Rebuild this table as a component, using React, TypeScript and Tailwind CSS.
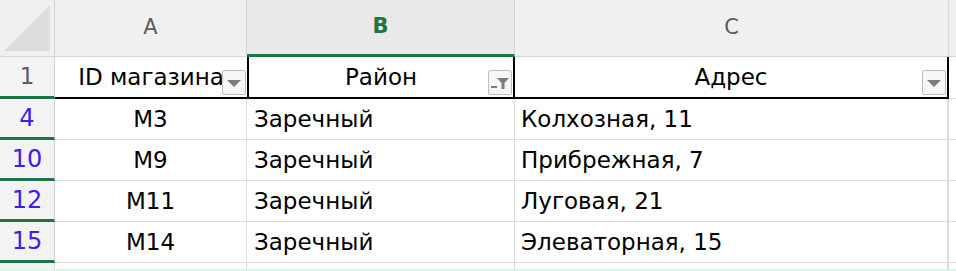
import React from "react";

const rows = [
	{ n: "4", id: "M3", area: "Заречный", addr: "Колхозная, 11" },
	{ n: "10", id: "M9", area: "Заречный", addr: "Прибрежная, 7" },
	{ n: "12", id: "M11", area: "Заречный", addr: "Луговая, 21" },
	{ n: "15", id: "M14", area: "Заречный", addr: "Элеваторная, 15" },
];

function DropButton({ filter }: { filter?: boolean }) {
	return (
		<div className="absolute right-[1px] bottom-[2px] flex h-[25px] w-[24px] items-center justify-center rounded-[2px] border border-[#bdbdbd] bg-[#f6f6f6]">
			{filter ? (
				<svg width="20" height="14" viewBox="0 0 20 14">
					<rect x="1" y="10" width="6" height="2" fill="#7c7c7c" />
					<path d="M7 2h12l-4.5 5v6h-3V7z" fill="#7c7c7c" />
				</svg>
			) : (
				<svg width="14" height="8" viewBox="0 0 14 8">
					<path d="M0 1h14L7 8z" fill="#7c7c7c" />
				</svg>
			)}
		</div>
	);
}

export default function App() {
	return (
		<div
			className="h-[271px] w-[956px] overflow-hidden bg-white text-black"
			style={{ fontFamily: '"DejaVu Sans", Verdana, sans-serif' }}
		>
			<div className="grid grid-cols-[55px_192px_268px_434px_7px] grid-rows-[57px_42px_41px_41px_41px_41px_8px]">
				{/* column letters */}
				<div className="relative border-r border-b border-[#d4d4d4] bg-[#f0f0f0]">
					<svg className="absolute left-[3px] top-[4px]" width="48" height="48" viewBox="0 0 48 48">
						<path d="M47 1V47H1z" fill="#dcdcdc" />
					</svg>
				</div>
				<div className="flex items-center justify-center border-r border-b border-[#d4d4d4] bg-[#f0f0f0] text-[21px] text-[#5c5c5c]">
					A
				</div>
				<div className="flex items-center justify-center border-r border-b-[3px] border-r-[#d4d4d4] border-b-[#1d7446] bg-[#e9e9e9] text-[21px] font-bold text-[#1d7446]">
					B
				</div>
				<div className="flex items-center justify-center border-r border-b border-[#d4d4d4] bg-[#f0f0f0] text-[21px] text-[#5c5c5c]">
					C
				</div>
				<div className="border-b border-[#d4d4d4] bg-[#f0f0f0]" />

				{/* row 1 */}
				<div className="flex items-center justify-center border-r border-r-[#d4d4d4] border-b-[3px] border-b-[#1d7446] bg-[#f3f3f3] text-[23px] text-[#5c5c5c]">
					1
				</div>
				<div className="relative flex items-center justify-center overflow-hidden border-b-2 border-black text-[23px]">
					<span className="whitespace-nowrap">ID магазина</span>
					<DropButton />
				</div>
				<div className="relative flex items-center justify-center border-x-2 border-b-2 border-black text-[23px]">
					Район
					<DropButton filter />
				</div>
				<div className="relative flex items-center justify-center border-r-2 border-b-2 border-black text-[23px]">
					Адрес
					<DropButton />
				</div>
				<div className="border-b border-[#e0e0e0]" />

				{rows.map((r) => (
					<React.Fragment key={r.n}>
						<div className="flex items-center justify-center border-r border-r-[#d4d4d4] border-b-[3px] border-b-[#1d7446] bg-[#f3f3f3] text-[24px] text-[#3d1cf4]">
							{r.n}
						</div>
						<div className="flex items-center justify-center border-r border-b border-[#dcdcdc] text-[23px]">
							{r.id}
						</div>
						<div className="flex items-center border-r border-b border-[#dcdcdc] pl-[7px] text-[23px]">
							{r.area}
						</div>
						<div className="flex items-center border-r-2 border-b border-[#dcdcdc] pl-[6px] text-[23px]">
							{r.addr}
						</div>
						<div className="border-b border-[#dcdcdc]" />
					</React.Fragment>
				))}

				<div className="border-r border-r-[#d4d4d4] border-b-[2px] border-b-[#d9f7e3] bg-[#f3f3f3]" />
				<div className="border-r border-b-[2px] border-r-[#dcdcdc] border-b-[#d9f7e3]" />
				<div className="border-r border-b-[2px] border-r-[#dcdcdc] border-b-[#d9f7e3]" />
				<div className="border-r-2 border-b-[2px] border-r-[#dcdcdc] border-b-[#d9f7e3]" />
				<div className="border-b-[2px] border-b-[#d9f7e3]" />
			</div>
		</div>
	);
}
